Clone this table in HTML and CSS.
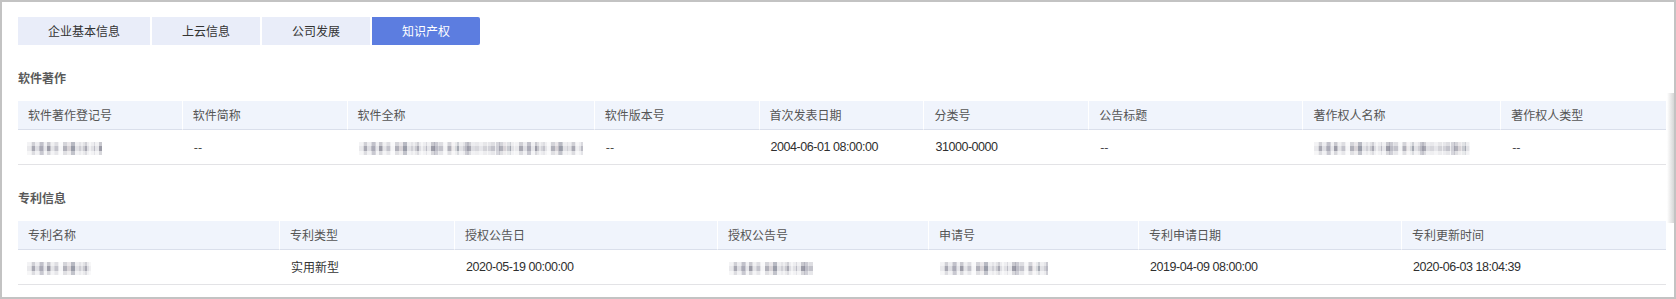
FILE: index.html
```html
<!DOCTYPE html>
<html lang="zh-CN">
<head>
<meta charset="utf-8">
<title>知识产权</title>
<link rel="stylesheet" href="styles.css">
</head>
<body>
<div class="frame">
  <div class="tabs">
    <div class="tab">企业基本信息</div>
    <div class="tab">上云信息</div>
    <div class="tab">公司发展</div>
    <div class="tab active">知识产权</div>
  </div>

  <div class="section-title">软件著作</div>
  <table class="grid">
    <colgroup>
      <col class="w10"><col class="w10"><col class="w15"><col class="w10"><col class="w10"><col class="w10"><col class="w13"><col class="w12"><col class="w10">
    </colgroup>
    <thead>
      <tr>
        <th>软件著作登记号</th>
        <th>软件简称</th>
        <th>软件全称</th>
        <th>软件版本号</th>
        <th>首次发表日期</th>
        <th>分类号</th>
        <th>公告标题</th>
        <th>著作权人名称</th>
        <th>著作权人类型</th>
      </tr>
    </thead>
    <tbody>
      <tr>
        <td><span class="mosaic m75"></span></td>
        <td>--</td>
        <td><span class="mosaic m224"></span></td>
        <td>--</td>
        <td class="num">2004-06-01 08:00:00</td>
        <td class="num">31000-0000</td>
        <td>--</td>
        <td><span class="mosaic m156"></span></td>
        <td>--</td>
      </tr>
    </tbody>
  </table>

  <div class="section-title">专利信息</div>
  <table class="grid">
    <colgroup>
      <col class="p262"><col class="p175"><col class="p263"><col class="p211"><col class="p210"><col class="p263"><col class="p264">
    </colgroup>
    <thead>
      <tr>
        <th>专利名称</th>
        <th>专利类型</th>
        <th>授权公告日</th>
        <th>授权公告号</th>
        <th>申请号</th>
        <th>专利申请日期</th>
        <th>专利更新时间</th>
      </tr>
    </thead>
    <tbody>
      <tr>
        <td><span class="mosaic m64"></span></td>
        <td>实用新型</td>
        <td class="num">2020-05-19 00:00:00</td>
        <td><span class="mosaic m84"></span></td>
        <td><span class="mosaic m108"></span></td>
        <td class="num">2019-04-09 08:00:00</td>
        <td class="num">2020-06-03 18:04:39</td>
      </tr>
    </tbody>
  </table>

  <div class="edge-shadow"></div>
</div>
</body>
</html>
```

FILE: styles.css
```css
* {
  box-sizing: border-box;
}

html, body {
  margin: 0;
  padding: 0;
  background: #ffffff;
}

body {
  font-family: "Noto Sans CJK SC", "Noto Sans", sans-serif;
  font-size: 12px;
  color: #333333;
}

.frame {
  position: relative;
  height: 299px;
  border: 2px solid #c3c3c3;
  padding: 15px 8px 0 16px;
  overflow: hidden;
}

.tabs {
  display: flex;
  gap: 2px;
}

.tab {
  height: 28px;
  line-height: 28px;
  padding: 0 30px;
  background: #e9edf9;
  color: #333333;
  font-size: 12px;
  white-space: nowrap;
}

.tab.active {
  background: #5c7de0;
  color: #ffffff;
  border-radius: 0 2px 2px 0;
}

.section-title {
  margin: 23px 0 13px;
  height: 20px;
  line-height: 20px;
  font-size: 12px;
  font-weight: 700;
  color: #5a5a5a;
}

.grid {
  width: 100%;
  table-layout: fixed;
  border-collapse: separate;
  border-spacing: 0;
}

.grid th {
  height: 29px;
  padding: 0 10px;
  background: #f0f4fc;
  color: #555555;
  font-weight: 400;
  text-align: left;
  line-height: 16px;
  border-right: 1px solid #ffffff;
  border-bottom: 1px solid #dadfeb;
  white-space: nowrap;
}

.grid th:last-child {
  border-right: none;
}

.grid td {
  height: 35px;
  padding: 0 10px 0 11px;
  color: #333333;
  line-height: 16px;
  border-bottom: 1px solid #e3e3e6;
  white-space: nowrap;
  vertical-align: middle;
}

.grid td:first-child {
  padding-left: 9px;
}

.grid td.num {
  font-family: "Liberation Sans", "Noto Sans CJK SC", sans-serif;
  font-size: 12.5px;
  letter-spacing: -0.45px;
  color: #2f2f2f;
}

.w10 { width: 10%; }
.w12 { width: 12%; }
.w13 { width: 13%; }
.w15 { width: 15%; }

.p262 { width: 262px; }
.p175 { width: 175px; }
.p263 { width: 263px; }
.p211 { width: 211px; }
.p210 { width: 210px; }
.p264 { width: 264px; }

.mosaic {
  display: inline-block;
  height: 13px;
  vertical-align: middle;
  background:
    repeating-linear-gradient(90deg,
      rgba(255,255,255,0.55) 0 5px, rgba(255,255,255,0) 5px 13px,
      rgba(120,120,140,0.25) 13px 17px, rgba(255,255,255,0) 17px 23px,
      rgba(255,255,255,0.4) 23px 27px, rgba(255,255,255,0) 27px 31px),
    linear-gradient(to bottom, rgba(255,255,255,0.45) 0 4px, rgba(255,255,255,0) 4px 9px, rgba(255,255,255,0.6) 9px),
    repeating-linear-gradient(90deg,
      #cfcfd5 0 4px, #a9a9b3 4px 8px, #dedee3 8px 12px, #bcbcc5 12px 16px,
      #e6e6ea 16px 20px, #9d9da8 20px 24px, #d3d3d9 24px 28px, #c3c3cb 28px 32px,
      #ececef 32px 36px, #b1b1ba 36px 40px, #d8d4d8 40px 44px, #a5a9b2 44px 48px,
      #e2e2e6 48px 52px);
  filter: blur(0.7px);
}

.m64 { width: 64px; }
.m75 { width: 75px; }
.m84 { width: 84px; }
.m108 { width: 108px; }
.m156 { width: 156px; }
.m224 { width: 224px; }

.edge-shadow {
  position: absolute;
  right: 0;
  top: 91px;
  width: 7px;
  height: 130px;
  background: linear-gradient(to right, rgba(255,255,255,0), #d6d6d6);
}
```
